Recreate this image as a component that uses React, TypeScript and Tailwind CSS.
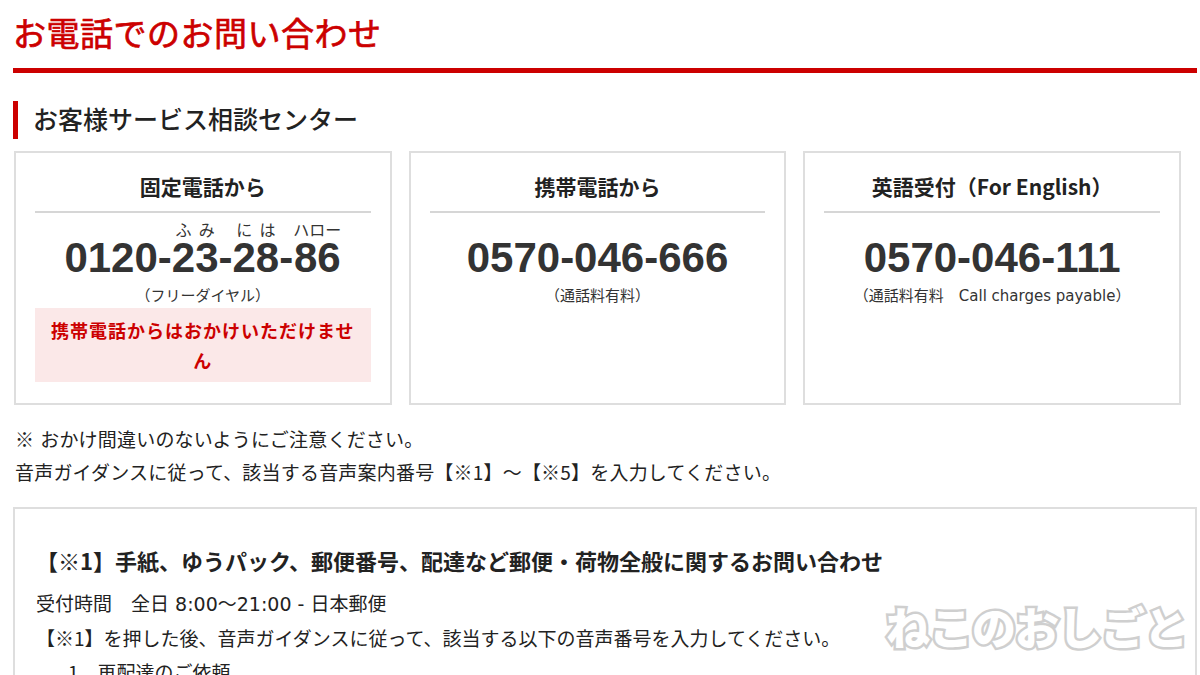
import React from 'react'

const jp = { fontFamily: '"Noto Sans CJK JP", "Noto Sans", sans-serif' }
const arial = { fontFamily: '"Liberation Sans", Arial, sans-serif' }
// Meiryo's latin glyphs are Verdana-like, DejaVu is the closest we have
const lat = { fontFamily: '"DejaVu Sans", "Noto Sans CJK JP", sans-serif' }

interface Group {
  digits: string
  ruby?: string
}

interface PhoneCard {
  title: string
  groups: Group[]
  note: React.ReactNode
  warning?: string
}

const cards: PhoneCard[] = [
  {
    title: '固定電話から',
    groups: [
      { digits: '0120-' },
      { digits: '23', ruby: 'ふみ' },
      { digits: '-' },
      { digits: '28', ruby: 'には' },
      { digits: '-' },
      { digits: '86', ruby: 'ハロー' },
    ],
    note: '（フリーダイヤル）',
    warning: '携帯電話からはおかけいただけません',
  },
  {
    title: '携帯電話から',
    groups: [{ digits: '0570-046-666' }],
    note: '（通話料有料）',
  },
  {
    title: '英語受付（For English）',
    groups: [{ digits: '0570-046-111' }],
    note: (
      <>
        （通話料有料　<span style={lat}>Call charges payable</span>）
      </>
    ),
  },
]

function NumberLine({ groups }: { groups: Group[] }) {
  return (
    <div className="flex justify-center items-end">
      {groups.map((g, i) => (
        <div key={i} className="flex flex-col items-stretch">
          <div className="h-[16px] flex justify-around text-[16px] leading-[16px] text-[#333] whitespace-nowrap">
            {(g.ruby ?? '').split('').map((ch, j) => (
              <span key={j}>{ch}</span>
            ))}
          </div>
          <span className="text-[42px] leading-[42px] font-bold text-[#333] text-center" style={arial}>
            {g.digits}
          </span>
        </div>
      ))}
    </div>
  )
}

export default function App() {
  return (
    <div className="w-[1200px] h-[675px] overflow-hidden bg-white relative" style={jp}>
      <div className="ml-[13px] w-[1184px] pt-[12px]">
        {/* Page title */}
        <h1 className="text-[33px] leading-[40px] font-normal text-[#cc0000] tracking-[0.5px] [-webkit-text-stroke:0.7px_#cc0000]">
          お電話でのお問い合わせ
        </h1>
        <div className="mt-[16px] h-[5px] bg-[#cc0000]" />

        {/* Section heading */}
        <div className="mt-[26px] flex items-center">
          <div className="w-[5px] h-[38px] bg-[#cc0000]" />
          <h2 className="ml-[15px] text-[25px] leading-[38px] font-medium text-[#222] pb-[3px]">
            お客様サービス相談センター
          </h2>
        </div>

        {/* Cards */}
        <div className="mt-[11px] ml-[1px] w-[1167px] grid grid-cols-3 gap-[17px]">
          {cards.map((c) => (
            <div key={c.title} className="border-2 border-[#dedede] px-[19px] pt-[19px] pb-[21px]">
              <div className="text-center text-[21px] leading-[28px] font-bold text-[#222]">{c.title}</div>
              <div className="mt-[11px] h-[2px] bg-[#d6d6d6]" />
              <div className="mt-[8px]">
                <NumberLine groups={c.groups} />
              </div>
              <div className="mt-[5px] text-center text-[15px] leading-[22px] text-[#333]">{c.note}</div>
              {c.warning && (
                <div className="mt-[2px] bg-[#fbe8e8] px-[14px] py-[7px] text-center text-[18px] leading-[30px] tracking-[1px] font-bold text-[#cc0000]">
                  {c.warning}
                </div>
              )}
            </div>
          ))}
        </div>

        {/* Notes */}
        <div className="mt-[17px] ml-[2px] text-[19px] leading-[33px] tracking-[0.2px] text-[#222]">
          <p>
            ※<span className="ml-[6px]">おかけ間違いのないようにご注意ください。</span>
          </p>
          <p>音声ガイダンスに従って、該当する音声案内番号【※1】～【※5】を入力してください。</p>
        </div>

        {/* Detail box */}
        <div className="mt-[19px] border-2 border-[#dedede] pl-[21px] pt-[36px] pb-[20px]">
          <h3 className="text-[22px] leading-[30px] font-bold text-[#222]">
            【※1】手紙、ゆうパック、郵便番号、配達など郵便・荷物全般に関するお問い合わせ
          </h3>
          <p className="mt-[11px] text-[19px] leading-[34px] text-[#222]">
            受付時間　全日<span style={lat}> 8:00</span>～<span style={lat}>21:00 - </span>日本郵便
          </p>
          <p className="text-[19px] leading-[34px] text-[#222]">
            【※1】を押した後、音声ガイダンスに従って、該当する以下の音声番号を入力してください。
          </p>
          <p className="pl-[32px] text-[19px] leading-[34px] text-[#222]">1　再配達のご依頼</p>
        </div>
      </div>

      {/* Watermark */}
      <div
        className="absolute left-[886px] top-[598px] text-[44px] leading-[56px] font-black text-white tracking-[-1px] [-webkit-text-stroke:5px_#cfcfcf] [paint-order:stroke_fill] select-none"
        style={jp}
      >
        ねこのおしごと
      </div>
    </div>
  )
}
